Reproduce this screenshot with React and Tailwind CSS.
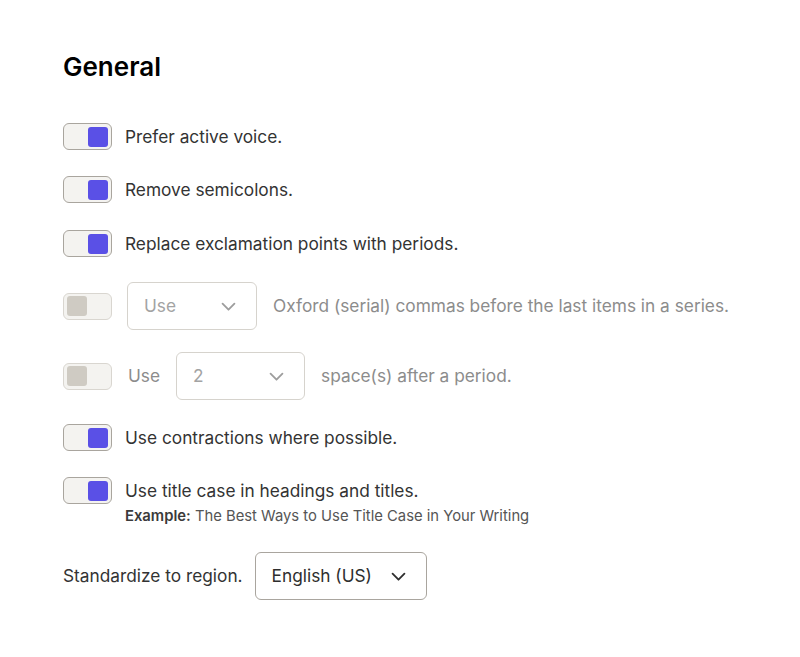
import React from 'react';

const Toggle = ({ on = true, disabled = false }) => (
    <div
        className={
            "w-[49px] h-[27px] shrink-0 rounded-[6px] border-[1.5px] bg-[#f4f3f0] flex items-center px-[3px] " +
            (disabled ? "border-[#d9d6d0] justify-start" : "border-[#a9a59e] justify-end")
        }
    >
        <div className={"w-[20px] h-[20px] rounded-[3px] " + (on && !disabled ? "bg-[#5a50e6]" : "bg-[#cfcbc3]")} />
    </div>
);

const Chevron = ({ color = "#3a3a3a" }) => (
    <svg width="19" height="19" viewBox="0 0 24 24" fill="none" stroke={color} strokeWidth="2.3" strokeLinecap="round" strokeLinejoin="round">
        <path d="M4.5 8.5l7.5 7.5 7.5-7.5" />
    </svg>
);

const Select = ({ value, width, disabled = false }) => (
    <div
        className={
            "h-[48px] shrink-0 rounded-[6px] border flex items-center justify-between pl-[16px] pr-[18px] " +
            (disabled ? "border-[#d6d3cd] text-[#a3a3a3]" : "border-[#a9a59e] text-[#2e2e2e]")
        }
        style={{ width }}
    >
        <span>{value}</span>
        <Chevron color={disabled ? "#9d9d9d" : "#2e2e2e"} />
    </div>
);

const Row = ({ children, className = "" }) => (
    <div className={"flex items-center " + className}>{children}</div>
);

export default function App() {
    return (
        <div className="min-h-screen bg-white pl-[63px] pt-[50px] text-[17.3px] text-[#333333]" style={{ fontFamily: 'Inter, "Noto Sans", sans-serif' }}>
            <h1 className="text-[26px] font-semibold text-black leading-[34px] mb-[39px]">General</h1>

            <div className="flex flex-col">
                <Row className="gap-[13px]">
                    <Toggle />
                    <span>Prefer active voice.</span>
                </Row>
                <Row className="mt-[26px] gap-[13px]">
                    <Toggle />
                    <span>Remove semicolons.</span>
                </Row>
                <Row className="mt-[27px] gap-[13px]">
                    <Toggle />
                    <span>Replace exclamation points with periods.</span>
                </Row>
                <Row className="mt-[25px] gap-[15px] text-[#8c8c8c]">
                    <Toggle disabled />
                    <Select value="Use" width={130} disabled />
                    <span className="ml-[1px]">Oxford (serial) commas before the last items in a series.</span>
                </Row>
                <Row className="mt-[22px] gap-[16px] text-[#8c8c8c]">
                    <Toggle disabled />
                    <span>Use</span>
                    <Select value="2" width={129} disabled />
                    <span>space(s) after a period.</span>
                </Row>
                <Row className="mt-[24px] gap-[13px]">
                    <Toggle />
                    <span>Use contractions where possible.</span>
                </Row>
                <div className="mt-[26px] flex gap-[13px] items-start">
                    <Toggle />
                    <div className="flex flex-col">
                        <span className="leading-[27px]">Use title case in headings and titles.</span>
                        <span className="text-[14.8px] text-[#555555] mt-[1px]">
                            <span className="font-semibold text-[#3a3a3a]">Example:</span> The Best Ways to Use Title Case in Your Writing
                        </span>
                    </div>
                </div>
                <Row className="mt-[25px] gap-[12px]">
                    <span>Standardize to region.</span>
                    <Select value="English (US)" width={172} />
                </Row>
            </div>
        </div>
    );
}
